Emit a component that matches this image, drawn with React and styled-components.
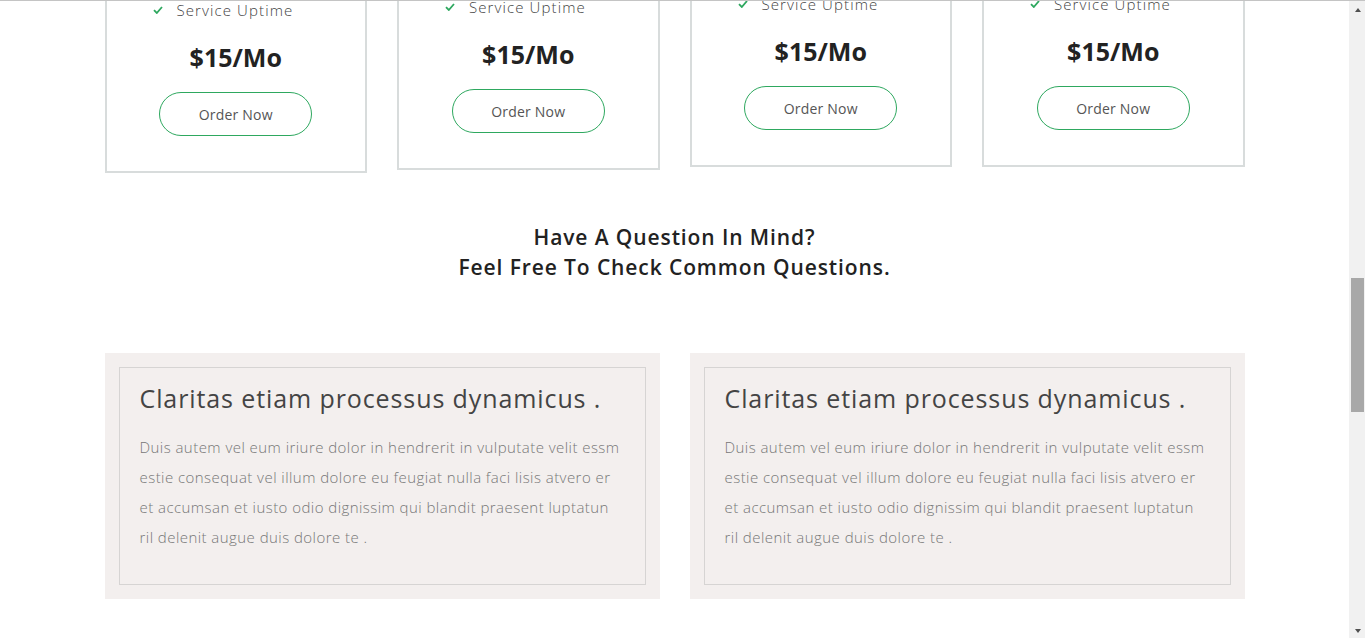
import React, { useLayoutEffect, useRef } from "react";
import styled, { createGlobalStyle } from "styled-components";

const GlobalStyle = createGlobalStyle`
  html, body {
    margin: 0;
    padding: 0;
    overflow: hidden;
    background: #fff;
  }
  body {
    font-family: "Open Sans", "Liberation Sans", sans-serif;
    color: #333;
  }
  * { box-sizing: border-box; }
`;

const GREEN = "#2ea85f";

const Shell = styled.div`
  display: flex;
  height: 100vh;
  border-top: 1px solid #c4c4c4;
`;

const Main = styled.main`
  flex: 1;
  min-width: 0;
  overflow: hidden;
`;

// classic grey window scrollbar drawn beside the page
const ScrollBar = styled.div`
  width: 16px;
  display: flex;
  flex-direction: column;
  background: #f1f1f1;
`;

const ScrollButton = styled.div`
  height: 15px;
  display: flex;
  justify-content: center;
  align-items: center;
  padding: ${(p) => (p.down ? "0 0 0 1px" : "3px 0 0 1px")};
`;

const Arrow = styled.span`
  width: 0;
  height: 0;
  border-left: 3.5px solid transparent;
  border-right: 3.5px solid transparent;
  ${(p) => (p.down ? "border-top" : "border-bottom")}: 4px solid #505050;
`;

const Track = styled.div`
  flex: 1;
  padding: 0 1px 0 2px;
`;

const Thumb = styled.div`
  margin-top: ${(p) => p.top}px;
  height: ${(p) => p.size}px;
  background: #a8a8a8;
`;

const Container = styled.div`
  width: 1140px;
  margin: 0 auto;
`;

// hero above the fold (scrolled out of view)
const Hero = styled.header`
  height: 830px;
  background: #1d2b36;
  color: #fff;
  display: flex;
  align-items: center;
  justify-content: center;
  font-size: 40px;
  font-weight: 600;
`;

const Section = styled.section`
  padding: ${(p) => p.pad || "0"};
`;

const SectionTitle = styled.h2`
  margin: 0 0 60px;
  text-align: center;
  font-size: 30px;
  font-weight: 600;
  color: #222;
`;

const CardRow = styled.div`
  display: grid;
  grid-template-columns: repeat(4, 1fr);
  column-gap: 30px;
  align-items: start;
`;

const Card = styled.div`
  border: 2px solid #d8dcdc;
  padding: 40px 0 35px;
  text-align: center;
  transform: translateY(${(p) => p.shift}px);
`;

const PlanName = styled.h3`
  margin: 0 0 24px;
  font-size: 22px;
  font-weight: 600;
  color: #222;
`;

const FeatureList = styled.ul`
  list-style: none;
  margin: 0;
  padding: 0 0 0 46px;
  text-align: left;
`;

const Feature = styled.li`
  display: flex;
  align-items: center;
  gap: 14px;
  height: 30px;
  font-size: 15px;
  font-weight: 300;
  letter-spacing: 1.1px;
  color: #444;
`;

const Price = styled.div`
  margin-top: 17px;
  font-size: 25px;
  line-height: 30px;
  font-weight: 700;
  color: #222;
`;

const OrderButton = styled.button`
  margin-top: 20px;
  width: 153px;
  height: 44px;
  border: 1px solid ${GREEN};
  border-radius: 22px;
  background: #fff;
  font-family: inherit;
  font-size: 14px;
  letter-spacing: 0.2px;
  color: #555;
  cursor: pointer;
`;

const Heading = styled.h2`
  margin: 49px 0 71px;
  text-align: center;
  font-size: 21px;
  line-height: 30px;
  font-weight: 600;
  letter-spacing: 0.9px;
  color: #222;
`;

const FaqGrid = styled.div`
  display: grid;
  grid-template-columns: repeat(2, 1fr);
  gap: 30px;
`;

const FaqItem = styled.div`
  background: #f3efee;
  padding: 14px;
`;

const FaqInner = styled.div`
  border: 1px solid #d6d4d3;
  padding: 16px 20px 32px;
`;

const FaqTitle = styled.h4`
  margin: 0 0 19px;
  font-size: 25px;
  line-height: 29px;
  font-weight: 400;
  letter-spacing: 0.9px;
  color: #444;
`;

const FaqText = styled.p`
  margin: 0;
  font-size: 15px;
  line-height: 30px;
  font-weight: 300;
  letter-spacing: 0.45px;
  color: #777;
`;

const TextLine = styled.span`
  display: block;
  white-space: nowrap;
`;

const Footer = styled.footer`
  margin-top: 150px;
  height: 890px;
  background: #1d2b36;
`;

const Check = () => (
  <svg width="10" height="8" viewBox="0 0 10 8" fill="none">
    <path d="M1 4.2 L3.8 7 L9 1" stroke={GREEN} strokeWidth="1.8" />
  </svg>
);

const plans = [
  { name: "Basic", shift: 0 },
  { name: "Standard", shift: -3 },
  { name: "Premium", shift: -6 },
  { name: "Ultimate", shift: -6 },
];

const features = ["10 GB Storage", "Unlimited Bandwidth", "Free Domain", "24/7 Support", "Service Uptime"];

const faqLines = [
  "Duis autem vel eum iriure dolor in hendrerit in vulputate velit essm",
  "estie consequat vel illum dolore eu feugiat nulla faci lisis atvero er",
  "et accumsan et iusto odio dignissim qui blandit praesent luptatun",
  "ril delenit augue duis dolore te .",
];

function App() {
  const viewRef = useRef(null);
  const faqRef = useRef(null);

  // scroll the page so the FAQ block sits where the screenshot shows it
  useLayoutEffect(() => {
    const view = viewRef.current;
    const faq = faqRef.current;
    if (!view || !faq) return;
    view.scrollTop += faq.getBoundingClientRect().top - 353;
  }, []);

  return (
    <>
      <GlobalStyle />
      <Shell>
        <Main ref={viewRef}>
          <Hero>Fast &amp; Reliable Hosting</Hero>
          <Section pad="90px 0 0">
            <Container>
              <SectionTitle>Our Pricing Plans</SectionTitle>
              <CardRow>
                {plans.map((plan) => (
                  <Card key={plan.name} shift={plan.shift}>
                    <PlanName>{plan.name}</PlanName>
                    <FeatureList>
                      {features.map((f) => (
                        <Feature key={f}>
                          <Check />
                          {f}
                        </Feature>
                      ))}
                    </FeatureList>
                    <Price>$15/Mo</Price>
                    <OrderButton>Order Now</OrderButton>
                  </Card>
                ))}
              </CardRow>
              <Heading>
                Have A Question In Mind?
                <br />
                Feel Free To Check Common Questions.
              </Heading>
              <FaqGrid ref={faqRef}>
                {[0, 1].map((i) => (
                  <FaqItem key={i}>
                    <FaqInner>
                      <FaqTitle>Claritas etiam processus dynamicus .</FaqTitle>
                      <FaqText>
                        {faqLines.map((l) => (
                          <TextLine key={l}>{l}</TextLine>
                        ))}
                      </FaqText>
                    </FaqInner>
                  </FaqItem>
                ))}
              </FaqGrid>
            </Container>
          </Section>
          <Footer />
        </Main>
        <ScrollBar>
          <ScrollButton>
            <Arrow />
          </ScrollButton>
          <Track>
            <Thumb top={262} size={134} />
          </Track>
          <ScrollButton down>
            <Arrow down />
          </ScrollButton>
        </ScrollBar>
      </Shell>
    </>
  );
}

export default App;
